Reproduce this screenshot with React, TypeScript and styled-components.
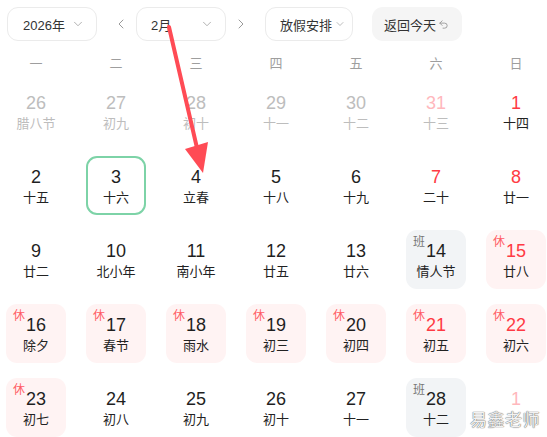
import React from 'react'
import styled, { createGlobalStyle } from 'styled-components'
import { ChevronDown, ChevronLeft, ChevronRight, Undo2 } from 'lucide-react'

const GlobalStyle = createGlobalStyle`
  html, body {
    margin: 0;
    padding: 0;
    background: #fff;
  }
  body {
    font-family: "Liberation Sans", "Noto Sans CJK SC", sans-serif;
    color: #222;
  }
`

const Page = styled.div`
  position: relative;
  width: 547px;
  height: 437px;
  overflow: hidden;
  padding: 7px 1px 0 6px;
  box-sizing: border-box;
`

const Toolbar = styled.div`
  display: flex;
  align-items: center;
  height: 34px;
  margin-left: 1px;
`

const Select = styled.div<{ $width: number; $pl: number; $pr: number }>`
  display: flex;
  align-items: center;
  justify-content: space-between;
  box-sizing: border-box;
  width: ${({ $width }) => $width}px;
  height: 34px;
  padding: 0 ${({ $pr }) => $pr}px 0 ${({ $pl }) => $pl}px;
  border: 1px solid #ebebeb;
  border-radius: 11px;
  font-size: 13px;
  color: #333;
  svg {
    color: #999;
  }
`

const NavButton = styled.div<{ $ml: number; $mr: number }>`
  display: flex;
  align-items: center;
  justify-content: center;
  width: 24px;
  height: 34px;
  margin-left: ${({ $ml }) => $ml}px;
  margin-right: ${({ $mr }) => $mr}px;
  color: #8a8a8a;
`

const TodayButton = styled.div`
  display: flex;
  align-items: center;
  gap: 2px;
  box-sizing: border-box;
  height: 34px;
  margin-left: 19px;
  padding: 0 13px 0 12px;
  border-radius: 11px;
  background: #f5f5f5;
  font-size: 13px;
  color: #333;
  svg {
    color: #999;
  }
`

const Grid = styled.div`
  display: grid;
  grid-template-columns: repeat(7, 60px);
  column-gap: 20px;
  row-gap: 15px;
`

const WeekHeader = styled(Grid)`
  margin-top: 13px;
  margin-bottom: 8px;
`

const WeekDay = styled.div`
  text-align: center;
  font-size: 13px;
  line-height: 20px;
  color: #9e9e9e;
`

type Kind = 'normal' | 'rest' | 'work' | 'today'

const Cell = styled.div<{ $kind: Kind }>`
  position: relative;
  box-sizing: border-box;
  height: 59px;
  padding-top: ${({ $kind }) => ($kind === 'today' ? 8 : 10)}px;
  border-radius: 11px;
  text-align: center;
  background: ${({ $kind }) =>
    $kind === 'rest' ? '#fff3f3' : $kind === 'work' ? '#f2f4f6' : 'transparent'};
  border: ${({ $kind }) => ($kind === 'today' ? '2px solid #7dd3a7' : 'none')};
`

const DayNum = styled.div<{ $color: string }>`
  font-size: 18px;
  line-height: 22px;
  color: ${({ $color }) => $color};
`

const Lunar = styled.div<{ $color: string }>`
  font-size: 13px;
  line-height: 20px;
  min-height: 20px;
  color: ${({ $color }) => $color};
`

const Badge = styled.span<{ $work?: boolean }>`
  position: absolute;
  top: 5px;
  left: 7px;
  font-size: 12px;
  line-height: 14px;
  color: ${({ $work }) => ($work ? '#777' : '#ff5c64')};
`

const Watermark = styled.div`
  position: absolute;
  right: 7px;
  bottom: 6px;
  font-size: 17px;
  letter-spacing: 0.5px;
  color: #f2f2f2;
  text-shadow: 0 0 1px #555, 0 0 1px #777;
`

const Annotation = styled.svg`
  position: absolute;
  left: 0;
  top: 0;
  pointer-events: none;
`

interface Day {
  d: number
  l: string
  out?: boolean
  weekend?: boolean
  kind?: Kind
}

const days: Day[] = [
  { d: 26, l: '腊八节', out: true },
  { d: 27, l: '初九', out: true },
  { d: 28, l: '初十', out: true },
  { d: 29, l: '十一', out: true },
  { d: 30, l: '十二', out: true },
  { d: 31, l: '十三', out: true, weekend: true },
  { d: 1, l: '十四', weekend: true },
  { d: 2, l: '十五' },
  { d: 3, l: '十六', kind: 'today' },
  { d: 4, l: '立春' },
  { d: 5, l: '十八' },
  { d: 6, l: '十九' },
  { d: 7, l: '二十', weekend: true },
  { d: 8, l: '廿一', weekend: true },
  { d: 9, l: '廿二' },
  { d: 10, l: '北小年' },
  { d: 11, l: '南小年' },
  { d: 12, l: '廿五' },
  { d: 13, l: '廿六' },
  { d: 14, l: '情人节', kind: 'work' },
  { d: 15, l: '廿八', weekend: true, kind: 'rest' },
  { d: 16, l: '除夕', kind: 'rest' },
  { d: 17, l: '春节', kind: 'rest' },
  { d: 18, l: '雨水', kind: 'rest' },
  { d: 19, l: '初三', kind: 'rest' },
  { d: 20, l: '初四', kind: 'rest' },
  { d: 21, l: '初五', weekend: true, kind: 'rest' },
  { d: 22, l: '初六', weekend: true, kind: 'rest' },
  { d: 23, l: '初七', kind: 'rest' },
  { d: 24, l: '初八' },
  { d: 25, l: '初九' },
  { d: 26, l: '初十' },
  { d: 27, l: '十一' },
  { d: 28, l: '十二', kind: 'work' },
  // lunar label hidden behind the watermark in the screenshot
  { d: 1, l: '', out: true, weekend: true },
]

const weekDays = ['一', '二', '三', '四', '五', '六', '日']

const numColor = (day: Day) => {
  if (day.out) return day.weekend ? '#ffb8bd' : '#bdbdbd'
  return day.weekend ? '#ff3a44' : '#1f1f1f'
}

const DayCell = ({ day }: { day: Day }) => {
  const kind = day.kind ?? 'normal'
  return (
    <Cell $kind={kind}>
      {kind === 'rest' && <Badge>休</Badge>}
      {kind === 'work' && <Badge $work>班</Badge>}
      <DayNum $color={numColor(day)}>{day.d}</DayNum>
      <Lunar $color={day.out ? '#bdbdbd' : '#222'}>{day.l}</Lunar>
    </Cell>
  )
}

const App = () => (
  <>
    <GlobalStyle />
    <Page>
      <Toolbar>
        <Select $width={90} $pl={15} $pr={11}>
          2026年
          <ChevronDown size={14} strokeWidth={1.3} />
        </Select>
        <NavButton $ml={12} $mr={3}>
          <ChevronLeft size={16} strokeWidth={1.3} />
        </NavButton>
        <Select $width={90} $pl={14} $pr={11}>
          2月
          <ChevronDown size={14} strokeWidth={1.3} />
        </Select>
        <NavButton $ml={3} $mr={12}>
          <ChevronRight size={16} strokeWidth={1.3} />
        </NavButton>
        <Select $width={88} $pl={14} $pr={6}>
          放假安排
          <ChevronDown size={12} strokeWidth={1.3} />
        </Select>
        <TodayButton>
          返回今天
          <Undo2 size={11} strokeWidth={2} />
        </TodayButton>
      </Toolbar>

      <WeekHeader>
        {weekDays.map((w) => (
          <WeekDay key={w}>{w}</WeekDay>
        ))}
      </WeekHeader>

      <Grid>
        {days.map((day, i) => (
          <DayCell key={i} day={day} />
        ))}
      </Grid>

      <Watermark>易鑫老师</Watermark>

      <Annotation width="547" height="437" viewBox="0 0 547 437">
        <line x1="169" y1="27" x2="197" y2="148" stroke="#ff4b55" strokeWidth="4" strokeLinecap="round" />
        <polygon points="185,149 208,142 203,173" fill="#ff4b55" />
      </Annotation>
    </Page>
  </>
)

export default App
